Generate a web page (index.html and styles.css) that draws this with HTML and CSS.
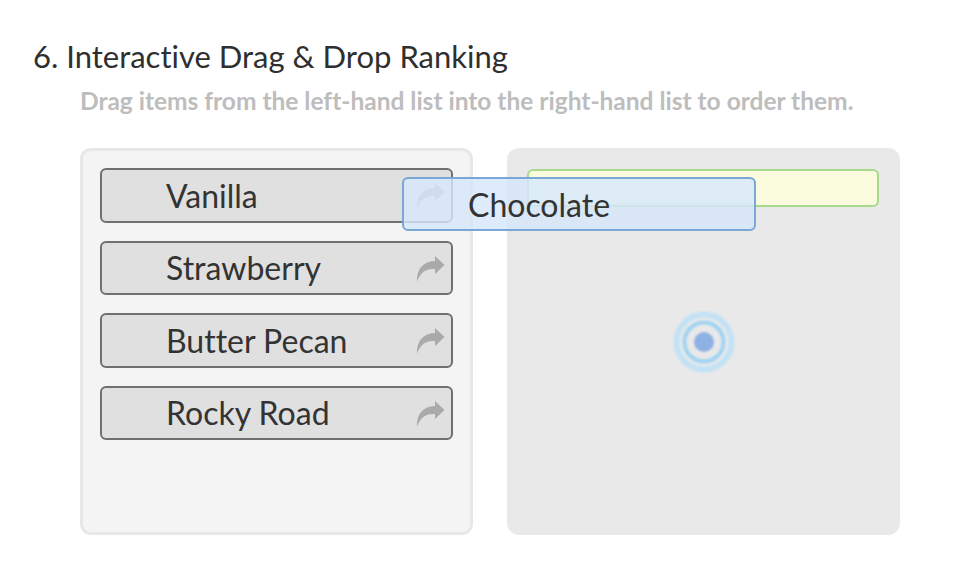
FILE: index.html
```html
<!DOCTYPE html>
<html lang="en">
<head>
    <meta charset="UTF-8">
    <meta name="viewport" content="width=device-width, initial-scale=1.0">
    <title>Interactive Drag &amp; Drop Ranking</title>
    <link rel="stylesheet" href="styles.css">
</head>
<body>
    <div class="page">
        <h1 class="title">6. Interactive Drag &amp; Drop Ranking</h1>
        <p class="hint">Drag items from the left-hand list into the right-hand list to order them.</p>

        <div class="ranking">
            <ul class="list source-list">
                <li class="item">
                    <span class="item-label">Vanilla</span>
                    <svg class="move-icon" viewBox="0 0 29 27"><path d="M19 1 L28.5 10 L19 19 V14 C11 13.6 5 16 1 26.5 C0.5 15 6 6.5 19 6 Z"/></svg>
                </li>
                <li class="item">
                    <span class="item-label">Strawberry</span>
                    <svg class="move-icon" viewBox="0 0 29 27"><path d="M19 1 L28.5 10 L19 19 V14 C11 13.6 5 16 1 26.5 C0.5 15 6 6.5 19 6 Z"/></svg>
                </li>
                <li class="item">
                    <span class="item-label">Butter Pecan</span>
                    <svg class="move-icon" viewBox="0 0 29 27"><path d="M19 1 L28.5 10 L19 19 V14 C11 13.6 5 16 1 26.5 C0.5 15 6 6.5 19 6 Z"/></svg>
                </li>
                <li class="item">
                    <span class="item-label">Rocky Road</span>
                    <svg class="move-icon" viewBox="0 0 29 27"><path d="M19 1 L28.5 10 L19 19 V14 C11 13.6 5 16 1 26.5 C0.5 15 6 6.5 19 6 Z"/></svg>
                </li>
            </ul>

            <ul class="list target-list">
                <li class="placeholder"></li>
                <!-- touch indicator -->
                <svg class="touch" viewBox="0 0 64 64">
                    <defs>
                        <filter id="soft"><feGaussianBlur stdDeviation="0.9"/></filter>
                    </defs>
                    <g filter="url(#soft)">
                        <circle cx="32" cy="32" r="27.5" fill="none" stroke="#c3e2f5" stroke-width="6"/>
                        <circle cx="32" cy="32" r="19.5" fill="none" stroke="#9fd3f3" stroke-width="4"/>
                        <circle cx="32" cy="32" r="10" fill="#8fb0e3"/>
                    </g>
                </svg>
            </ul>

            <div class="item dragging">
                <span class="item-label">Chocolate</span>
            </div>
        </div>
    </div>
</body>
</html>
```

FILE: styles.css
```css
body {
    margin: 0;
    background: #fff;
    font-family: Lato, "Open Sans", Arial, sans-serif;
    color: #333;
    font-variant-ligatures: none;
}

.page {
    padding: 38px 0 0 33px;
}

.title {
    margin: 0;
    font-size: 31px;
    font-weight: 400;
    line-height: 36px;
    color: #2f2f2f;
}

.hint {
    margin: 13px 0 0 47px;
    font-size: 24.5px;
    font-weight: 700;
    line-height: 28px;
    color: #bdbdbd;
}

.ranking {
    position: relative;
    display: grid;
    grid-template-columns: 393px 393px;
    gap: 34px;
    margin: 33px 0 0 47px;
}

.list {
    list-style: none;
    margin: 0;
    box-sizing: border-box;
    height: 387px;
    display: flex;
    flex-direction: column;
    gap: 18px;
}

.source-list {
    padding: 17px;
    background: #f4f4f4;
    border: 3px solid #e7e7e7;
    border-radius: 11px;
}

.target-list {
    position: relative;
    padding: 21px 21px 20px 20px;
    background: #e9e9e9;
    border-radius: 12px;
}

.item {
    box-sizing: border-box;
    height: 54.5px;
    display: flex;
    align-items: center;
    padding-left: 64px;
    padding-right: 6px;
    background: #e0e0e0;
    border: 2px solid #707070;
    border-radius: 6px;
}

.item-label {
    flex: 1;
    font-size: 32px;
    color: #333;
}

.move-icon {
    width: 29px;
    height: 27px;
    margin-top: 1px;
    fill: #aaa;
}

.placeholder {
    box-sizing: border-box;
    height: 38px;
    background: #fafcdd;
    border: 2px solid #a9d98a;
    border-radius: 6px;
}

.touch {
    position: absolute;
    left: 50%;
    top: 50%;
    width: 64px;
    height: 64px;
    margin: -32px 0 0 -32px;
}

.dragging {
    position: absolute;
    left: 322px;
    top: 29px;
    width: 354px;
    height: 54px;
    background: rgba(214, 231, 250, 0.82);
    border-color: #7ba7d8;
}
```
